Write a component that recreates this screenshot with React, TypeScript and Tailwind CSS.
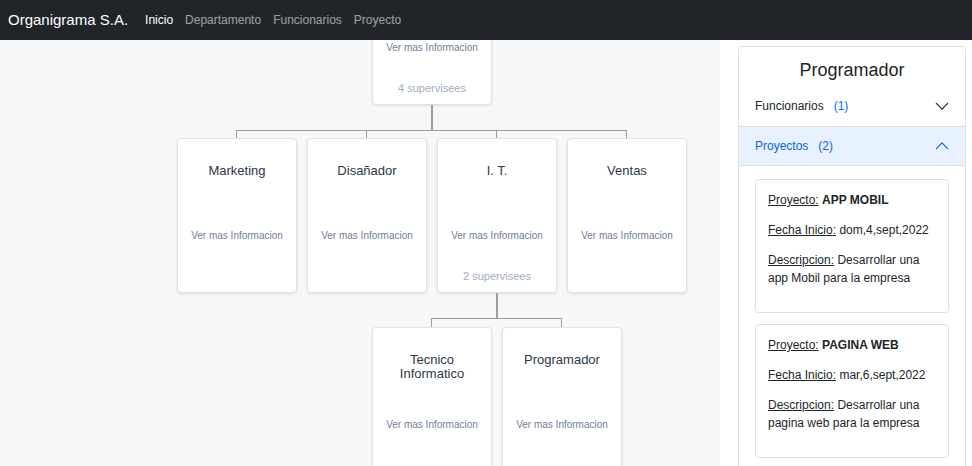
import React from 'react';

const font = { fontFamily: '"Liberation Sans", Arial, sans-serif' };

type NodeProps = {
  title?: string;
  supervisees?: number;
};

function OrgCard({ title, supervisees }: NodeProps) {
  return (
    <div className="w-[120px] h-[155px] shrink-0 rounded-[4px] border border-[#e2e2e2] bg-white shadow-[0_1px_3px_rgba(0,0,0,0.10)] flex flex-col items-center pt-[25px] px-[14px] text-center">
      <div className="h-[65px] text-[13px] leading-[14px] text-[#2d3748]">{title}</div>
      <div className="h-[13px] text-[10px] leading-[13px] text-[#718096] whitespace-nowrap">Ver mas Informacion</div>
      {supervisees ? (
        <div className="mt-[27px] text-[11px] leading-[14px] text-[#a0aec0]">{supervisees} supervisees</div>
      ) : null}
    </div>
  );
}

function Branch({ first, last, children, drop }: { first: boolean; last: boolean; children: React.ReactNode; drop: string }) {
  return (
    <div className="flex flex-col items-center w-[130px] shrink-0">
      <div className={drop + ' flex w-full'}>
        <div className={first ? 'w-1/2 border-r border-[#9e9e9e]' : 'w-1/2 border-r border-t border-[#9e9e9e]'} />
        <div className={last ? 'w-1/2' : 'w-1/2 border-t border-[#9e9e9e]'} />
      </div>
      {children}
    </div>
  );
}

function Chevron({ up }: { up?: boolean }) {
  return (
    <svg width="14" height="14" viewBox="0 0 16 16" fill="none" stroke="currentColor" strokeWidth="1.4" strokeLinecap="round" strokeLinejoin="round">
      {up ? <polyline points="1.5,11 8,4.5 14.5,11" /> : <polyline points="1.5,5 8,11.5 14.5,5" />}
    </svg>
  );
}

const departments = ['Marketing', 'Disañador', 'I. T.', 'Ventas'];
const itTeam = ['Tecnico Informatico', 'Programador'];

const projects = [
  { name: 'APP MOBIL', date: 'dom,4,sept,2022', desc: 'Desarrollar una app Mobil para la empresa' },
  { name: 'PAGINA WEB', date: 'mar,6,sept,2022', desc: 'Desarrollar una pagina web para la empresa' },
];

export default function App() {
  return (
    <div className="w-[972px] h-[466px] overflow-hidden bg-white flex flex-col" style={font}>
      {/* Navbar */}
      <nav className="h-[40px] shrink-0 bg-[#212529] flex items-center pl-[8px]">
        <span className="text-[15px] text-white">Organigrama S.A.</span>
        <div className="flex items-center gap-[12px] ml-[17px] text-[12px]">
          <span className="text-white">Inicio</span>
          <span className="text-white/55">Departamento</span>
          <span className="text-white/55">Funcionarios</span>
          <span className="text-white/55">Proyecto</span>
        </div>
      </nav>

      <div className="flex flex-1 min-h-0">
        {/* Chart */}
        <div className="w-[720px] shrink-0 bg-[#f7f8fa] overflow-hidden">
          <div className="ml-[172px] -mt-[90px] w-[520px] flex flex-col items-center">
            <OrgCard supervisees={4} />
            <div className="w-[2px] h-[25px] bg-[#9e9e9e]" />
            <div className="flex">
              {departments.map((d, i) => (
                <Branch key={d} first={i === 0} last={i === departments.length - 1} drop="h-[8px]">
                  <OrgCard title={d} supervisees={d === 'I. T.' ? 2 : undefined} />
                  {d === 'I. T.' && (
                    <>
                      <div className="w-[2px] h-[25px] bg-[#9e9e9e]" />
                      <div className="flex justify-center w-[130px]">
                        {itTeam.map((t, j) => (
                          <Branch key={t} first={j === 0} last={j === itTeam.length - 1} drop="h-[9px]">
                            <OrgCard title={t} />
                          </Branch>
                        ))}
                      </div>
                    </>
                  )}
                </Branch>
              ))}
            </div>
          </div>
        </div>

        {/* Side panel */}
        <div className="flex-1 bg-white pl-[18px] pr-[6px] pt-[6px]">
          <div className="h-[500px] border border-[#dfdfdf] rounded-[4px] bg-white">
            <div className="pt-[13px] text-center text-[18px] leading-[21px] text-[#212529]">Programador</div>
            <div className="mt-[5px] h-[41px] border-b border-[#dfdfdf] flex items-center pl-[16px] pr-[16px] text-[12px]">
              <span className="text-[#212529]">Funcionarios</span>
              <span className="ml-[10px] text-[#0d6efd]">(1)</span>
              <span className="ml-auto text-[#212529]"><Chevron /></span>
            </div>
            <div className="h-[39px] border-b border-[#dfdfdf] bg-[#e7f1ff] flex items-center pl-[16px] pr-[16px] text-[12px] text-[#0c63e4]">
              <span>Proyectos</span>
              <span className="ml-[10px]">(2)</span>
              <span className="ml-auto"><Chevron up /></span>
            </div>
            <div className="pt-[13px] px-[16px] flex flex-col gap-[11px]">
              {projects.map((p) => (
                <div key={p.name} className="border border-[#dfdfdf] rounded-[4px] pt-[11px] pb-[13px] px-[12px] text-[12px] leading-[18px] text-[#212529] flex flex-col gap-[12px]">
                  <p>
                    <span className="underline">Proyecto:</span> <b>{p.name}</b>
                  </p>
                  <p>
                    <span className="underline">Fecha Inicio:</span> {p.date}
                  </p>
                  <p className="mb-[12px]">
                    <span className="underline">Descripcion:</span> {p.desc}
                  </p>
                </div>
              ))}
            </div>
          </div>
        </div>
      </div>
    </div>
  );
}
